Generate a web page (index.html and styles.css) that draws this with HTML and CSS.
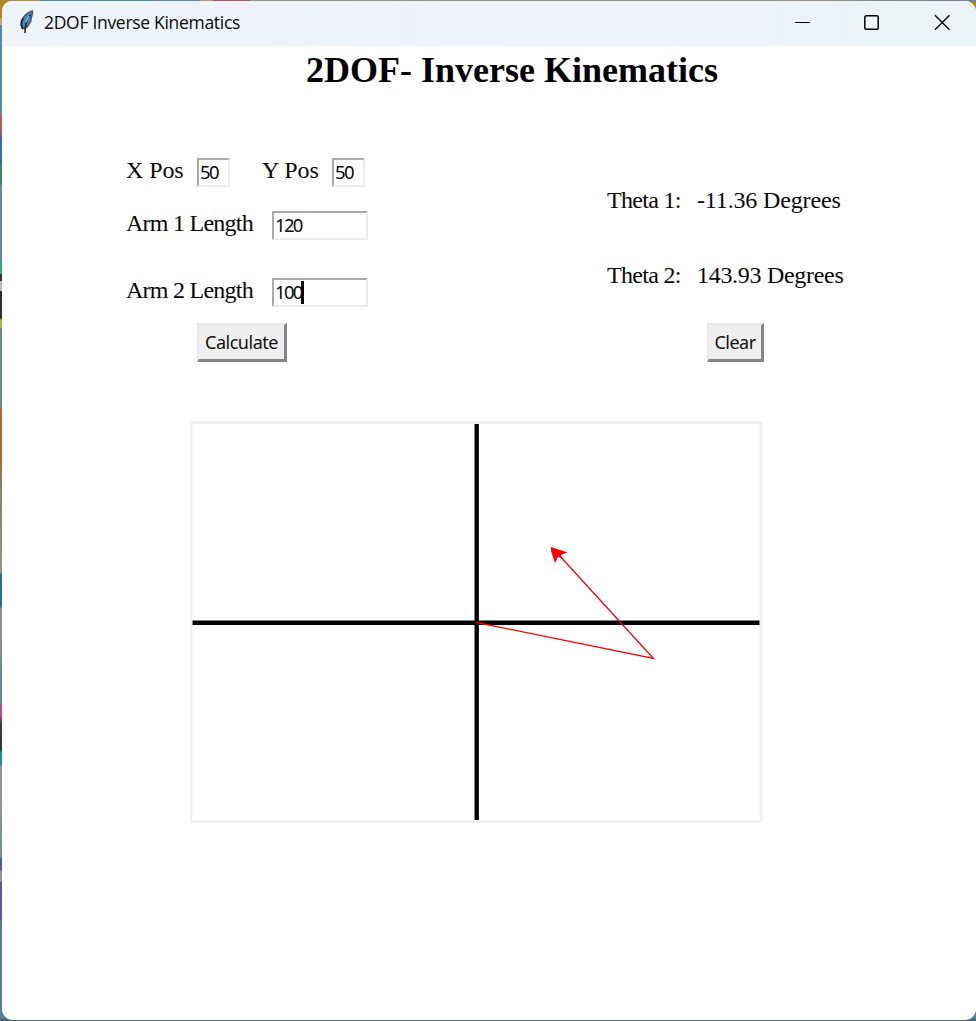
FILE: index.html
```html
<!DOCTYPE html>
<html lang="en">
<head>
<meta charset="utf-8">
<title>2DOF Inverse Kinematics</title>
<link rel="stylesheet" href="styles.css">
</head>
<body>
<div class="window">
  <header class="titlebar">
    <svg class="feather" width="16" height="26" viewBox="0 0 16 26">
      <path d="M14.300 2C9 3 3 9 3 15.500L4 19L7 19.500C11 17 13.500 12 13.200 9L14.600 4Z" fill="#4a86c6" stroke="#52585e" stroke-width="1.500"/>
      <path d="M5 9.500C3 13 3 17 5 20M12.500 6C9 10 7 15 7 24" fill="none" stroke="#14202c" stroke-width="1.600"/>
      <path d="M11 7L8 13" stroke="#86b8e8" stroke-width="1.500"/>
    </svg>
    <span class="caption">2DOF Inverse Kinematics</span>
    <svg class="controls" width="156" height="20" viewBox="0 0 156 20" fill="none" stroke="#000">
      <path d="M0 10.500H15" stroke-width="1.100"/>
      <rect x="69.800" y="3.800" width="13.400" height="13.400" rx="1.500" stroke-width="1.500"/>
      <path d="M140 3.200L154.500 17.700M154.500 3.200L140 17.700" stroke-width="1.300"/>
    </svg>
  </header>
  <main>
    <h1>2DOF- Inverse Kinematics</h1>
    <div class="panels">
      <div class="inputs">
        <div class="row">
          <span class="label xpos">X Pos</span><span class="field small">50</span>
          <span class="label ypos">Y Pos</span><span class="field small">50</span>
        </div>
        <div class="row arm1"><span class="label arm">Arm 1 Length</span><span class="field">120</span></div>
        <div class="row arm2"><span class="label arm">Arm 2 Length</span><span class="field focused">100</span></div>
        <button class="calculate">Calculate</button>
      </div>
      <div class="results">
        <div class="result"><span class="theta">Theta 1:</span><span class="value first">-11.36 Degrees</span></div>
        <div class="result"><span class="theta">Theta 2:</span><span class="value">143.93 Degrees</span></div>
        <button class="clear">Clear</button>
      </div>
    </div>
    <svg class="plot" width="573" height="402" viewBox="190 421 573 402">
      <rect x="191" y="422.500" width="570" height="399" fill="none" stroke="#f1f1f1" stroke-width="3"/>
      <path d="M476.700 424V820M192.500 622.700H759.500" stroke="#000" stroke-width="4.400"/>
      <path d="M476.500 622.500L653.500 658.500L558 554" fill="none" stroke="#f00" stroke-width="1.300"/>
      <path d="M551 547L567.500 552.500L561 555L562 558L558 557L555 563L551 551Z" fill="#f00"/>
    </svg>
  </main>
</div>
</body>
</html>
```
FILE: styles.css
```css
* { box-sizing: border-box; }
body {
  margin: 0;
  height: 1021px;
  padding: 1px 0 1px 2px;
  overflow: hidden;
  background:
    linear-gradient(90deg, #b58a2c 0 40px, #5685ae 40px 88px, #408ea0 88px 150px, #5b83af 150px 200px, #b69b63 200px 213px, #b85055 213px 250px, #9b9376 250px 800px, #75838c 900px) 0 0 / 100% 2px no-repeat,
    linear-gradient(#476574, #476574) 0 100% / 100% 2px no-repeat,
    linear-gradient(180deg, #b88618 0 18px, #c9a85a 18px 25px, #5d86ae 25px 114px, #b85a62 114px 133px, #3d68b8 137px 163px, #408565 163px 185px, #67869d 185px 261px, #32a982 261px 274px, #3b332b 274px 281px, #bbb 281px 291px, #332e2a 291px 318px, #a8b744 320px 328px, #6e8790 328px 408px, #b4662d 408px 460px, #88806f 480px, #9b9189 573px, #276e99 574px 607px, #92908c 608px 640px, #6a8795 670px 703px, #b94c88 704px 715px, #33393c 725px 750px, #238d98 752px 765px, #919795 766px 800px, #738f9c 857px, #5656ad 858px 870px, #969398 871px 881px, #5757af 882px 920px, #547f98 921px 1021px);
}
.window {
  height: 1019px;
  border-radius: 10px 11px 11px 11px;
  background: #fff;
  overflow: hidden;
}
.titlebar {
  height: 45px;
  display: flex;
  align-items: center;
  padding: 0 25px 0 16px;
  background: linear-gradient(90deg, #eef4f8, #edf2fb 52%, #edf2fb 78%, #ebf4f7 90%);
}
.feather { margin-top: -4px; }
.caption {
  margin: -3px auto 0 10px;
  font: 17.500px/24px "Open Sans", sans-serif;
  letter-spacing: -0.300px;
  color: #080808;
  white-space: nowrap;
}
.controls { margin-top: -3px; }
h1 {
  margin: 3px 0 0 304px;
  font: bold 36px/42px "Liberation Serif", serif;
  white-space: nowrap;
}
.panels {
  display: flex;
  margin-top: 67px;
  padding-left: 124px;
  font: 24px/30px "Liberation Serif", serif;
  color: #080808;
}
.inputs { width: 481px; }
.row { display: flex; height: 29px; white-space: nowrap; }
.label { margin-top: -3px; letter-spacing: -0.750px; }
.xpos { width: 71px; letter-spacing: -0.100px; }
.ypos { width: 70px; margin-left: 32px; letter-spacing: -0.100px; }
.arm { width: 146px; }
.arm1 { margin-top: 24px; }
.arm2 { margin-top: 38px; }
.field {
  width: 96px;
  height: 29px;
  padding-left: 1px;
  border: 2px solid #eee;
  border-top-color: #aaa;
  border-left-color: #aaa;
  font: 18.500px/24px "Noto Sans", sans-serif;
  letter-spacing: -1.700px;
}
.small { width: 33px; padding-left: 1px; }
.focused::after {
  content: "";
  display: inline-block;
  width: 3px;
  height: 23px;
  margin-left: -1px;
  vertical-align: -5px;
  background: #000;
}
button {
  display: block;
  height: 39px;
  padding: 0;
  border: 2px solid #e9e9e9;
  border-right: 3px solid #858585;
  border-bottom: 3px solid #858585;
  background: #efefef;
  color: #111;
  font: 18px/28px "Noto Sans", sans-serif;
  letter-spacing: -0.500px;
}
.calculate { width: 90px; margin: 16px 0 0 71px; }
.results { padding-top: 27px; }
.result { display: flex; height: 30px; margin-bottom: 45px; white-space: nowrap; }
.theta { width: 90px; letter-spacing: -0.700px; }
.value { letter-spacing: -0.300px; }
.first { letter-spacing: -0.150px; }
.clear { width: 57px; margin: -12px 0 0 100px; }
.plot { display: block; margin: 59px 0 0 188px; }
```
